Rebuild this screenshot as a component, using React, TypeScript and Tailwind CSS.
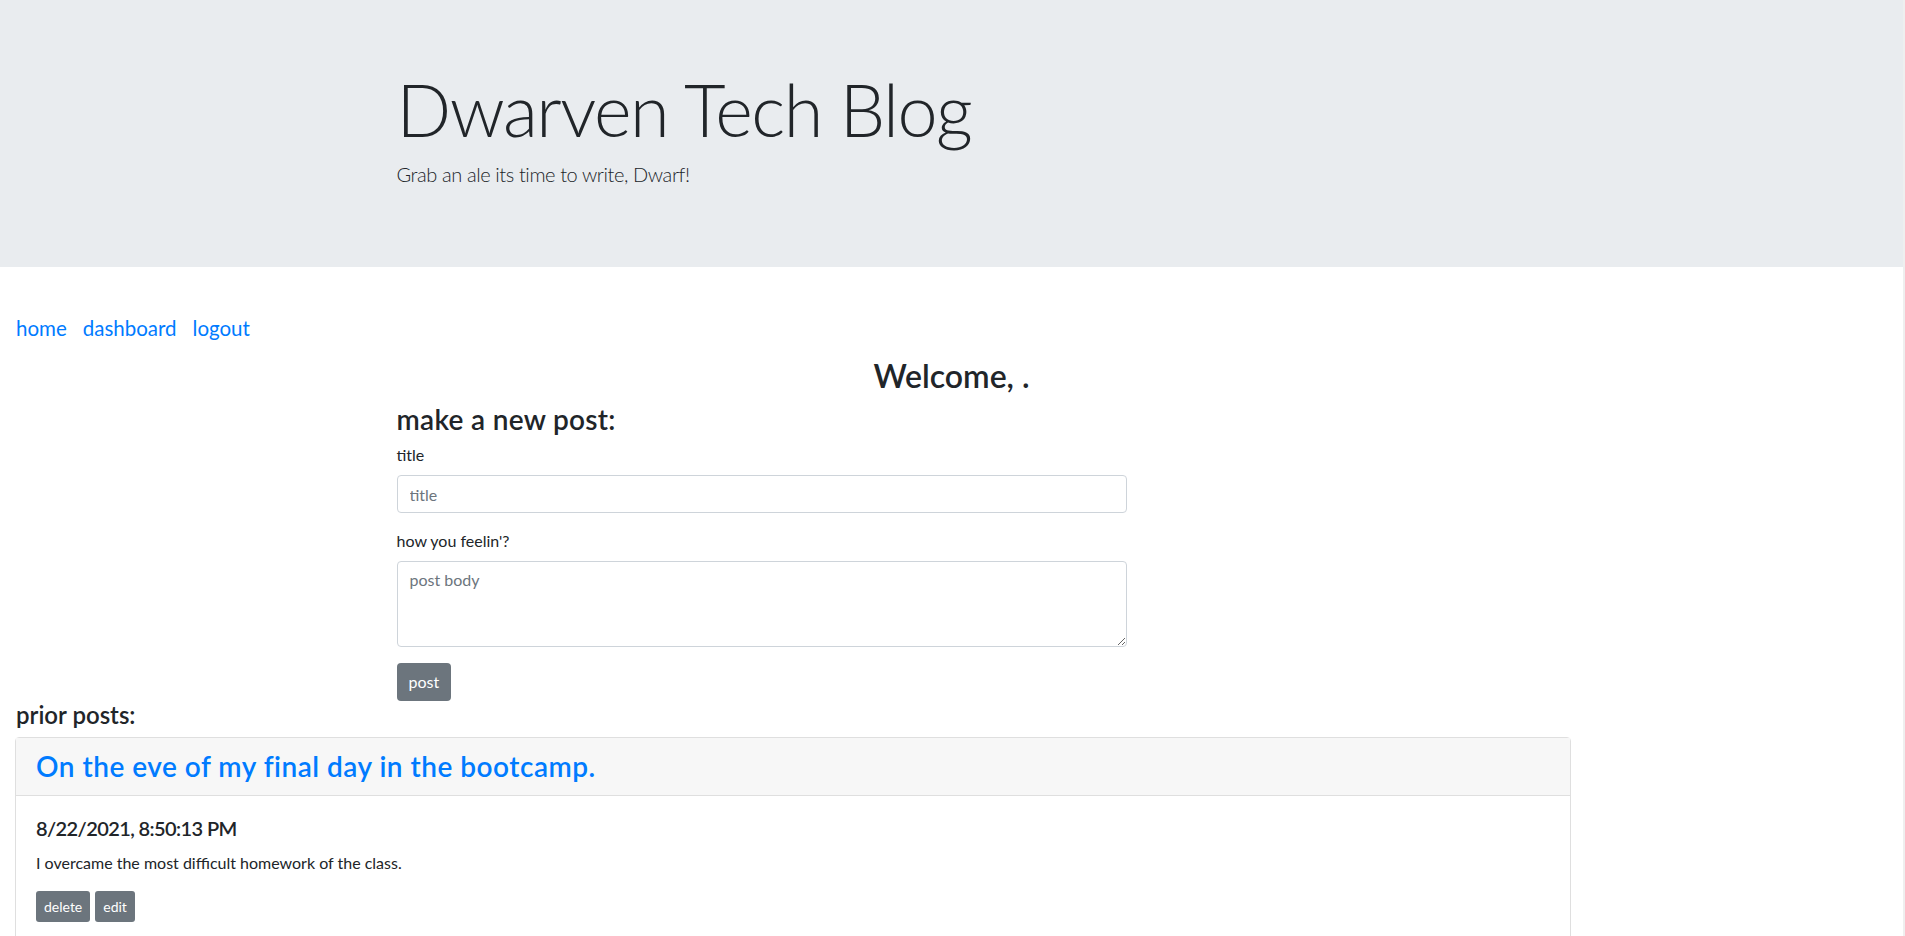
import React from "react";

const posts = [
  {
    id: 1,
    title: "On the eve of my final day in the bootcamp.",
    date: "8/22/2021, 8:50:13 PM",
    body: "I overcame the most difficult homework of the class.",
  },
];

export default function App() {
  return (
    <div className="min-h-screen bg-white border-r-2 border-[#efefef] font-['Lato',sans-serif] text-[#212529]">
      {/* jumbotron */}
      <header className="h-[267px] bg-[#e9ecef]">
        <div className="w-[1110px] mx-auto pt-[66px]">
          <h1 className="text-[72px] leading-[86.4px] font-light tracking-[-1.5px] mb-[7px]">Dwarven Tech Blog</h1>
          <p className="text-[20px] leading-[30px] font-light tracking-[-0.4px]">Grab an ale its time to write, Dwarf!</p>
        </div>
      </header>

      <nav className="pt-[46px] pl-[16px] flex gap-[16px] text-[20.5px] leading-[30px] text-[#007bff]">
        <a href="#">home</a>
        <a href="#">dashboard</a>
        <a href="#">logout</a>
      </nav>

      <h2 className="mt-[14px] mb-[8px] text-center text-[32px] leading-[38.4px] font-semibold">Welcome, .</h2>

      <div className="w-[1110px] mx-auto">
        <form className="w-[730px]" onSubmit={(e) => e.preventDefault()}>
          <h3 className="text-[28px] leading-[33.6px] font-semibold tracking-[0.3px] mb-[6px]">make a new post:</h3>
          <div className="mb-[16px]">
            <label className="block text-[16px] leading-[24px] mb-[8px]">title</label>
            <input
              type="text"
              placeholder="title"
              className="block w-full h-[38px] px-[12px] border border-[#ced4da] rounded-[4px] text-[16px] placeholder:text-[#6c757d] outline-none"
            />
          </div>
          <div className="mb-[16px]">
            <label className="block text-[16px] leading-[24px] mb-[8px]">how you feelin'?</label>
            <textarea
              rows={3}
              placeholder="post body"
              className="block w-full h-[86px] px-[12px] py-[6px] border border-[#ced4da] rounded-[4px] text-[16px] leading-[24px] placeholder:text-[#6c757d] outline-none"
            />
          </div>
          <button className="h-[38px] px-[12px] rounded-[4px] bg-[#6c757d] text-white text-[16px]">post</button>
        </form>
      </div>

      <h4 className="pl-[16px] text-[24px] leading-[28.8px] font-semibold mb-[7px]">prior posts:</h4>

      {posts.map((post) => (
        <div key={post.id} className="ml-[15px] w-[1556px] border border-[#dfdfdf] rounded-[4px]">
          <div className="bg-[#f7f7f7] border-b border-[#dfdfdf] px-[20px] py-[12px]">
            <h3 className="text-[28px] leading-[33.6px] font-semibold tracking-[0.5px] text-[#007bff]">{post.title}</h3>
          </div>
          <div className="p-[20px]">
            <h5 className="text-[20px] leading-[24px] font-semibold tracking-[-0.6px] mb-[11px]">{post.date}</h5>
            <p className="text-[16px] leading-[24px] mb-[16px]">{post.body}</p>
            <div className="flex gap-[5px]">
              <button className="h-[31px] px-[8px] rounded-[3px] bg-[#6c757d] text-white text-[14px]">delete</button>
              <button className="h-[31px] px-[8px] rounded-[3px] bg-[#6c757d] text-white text-[14px]">edit</button>
            </div>
          </div>
        </div>
      ))}
    </div>
  );
}
